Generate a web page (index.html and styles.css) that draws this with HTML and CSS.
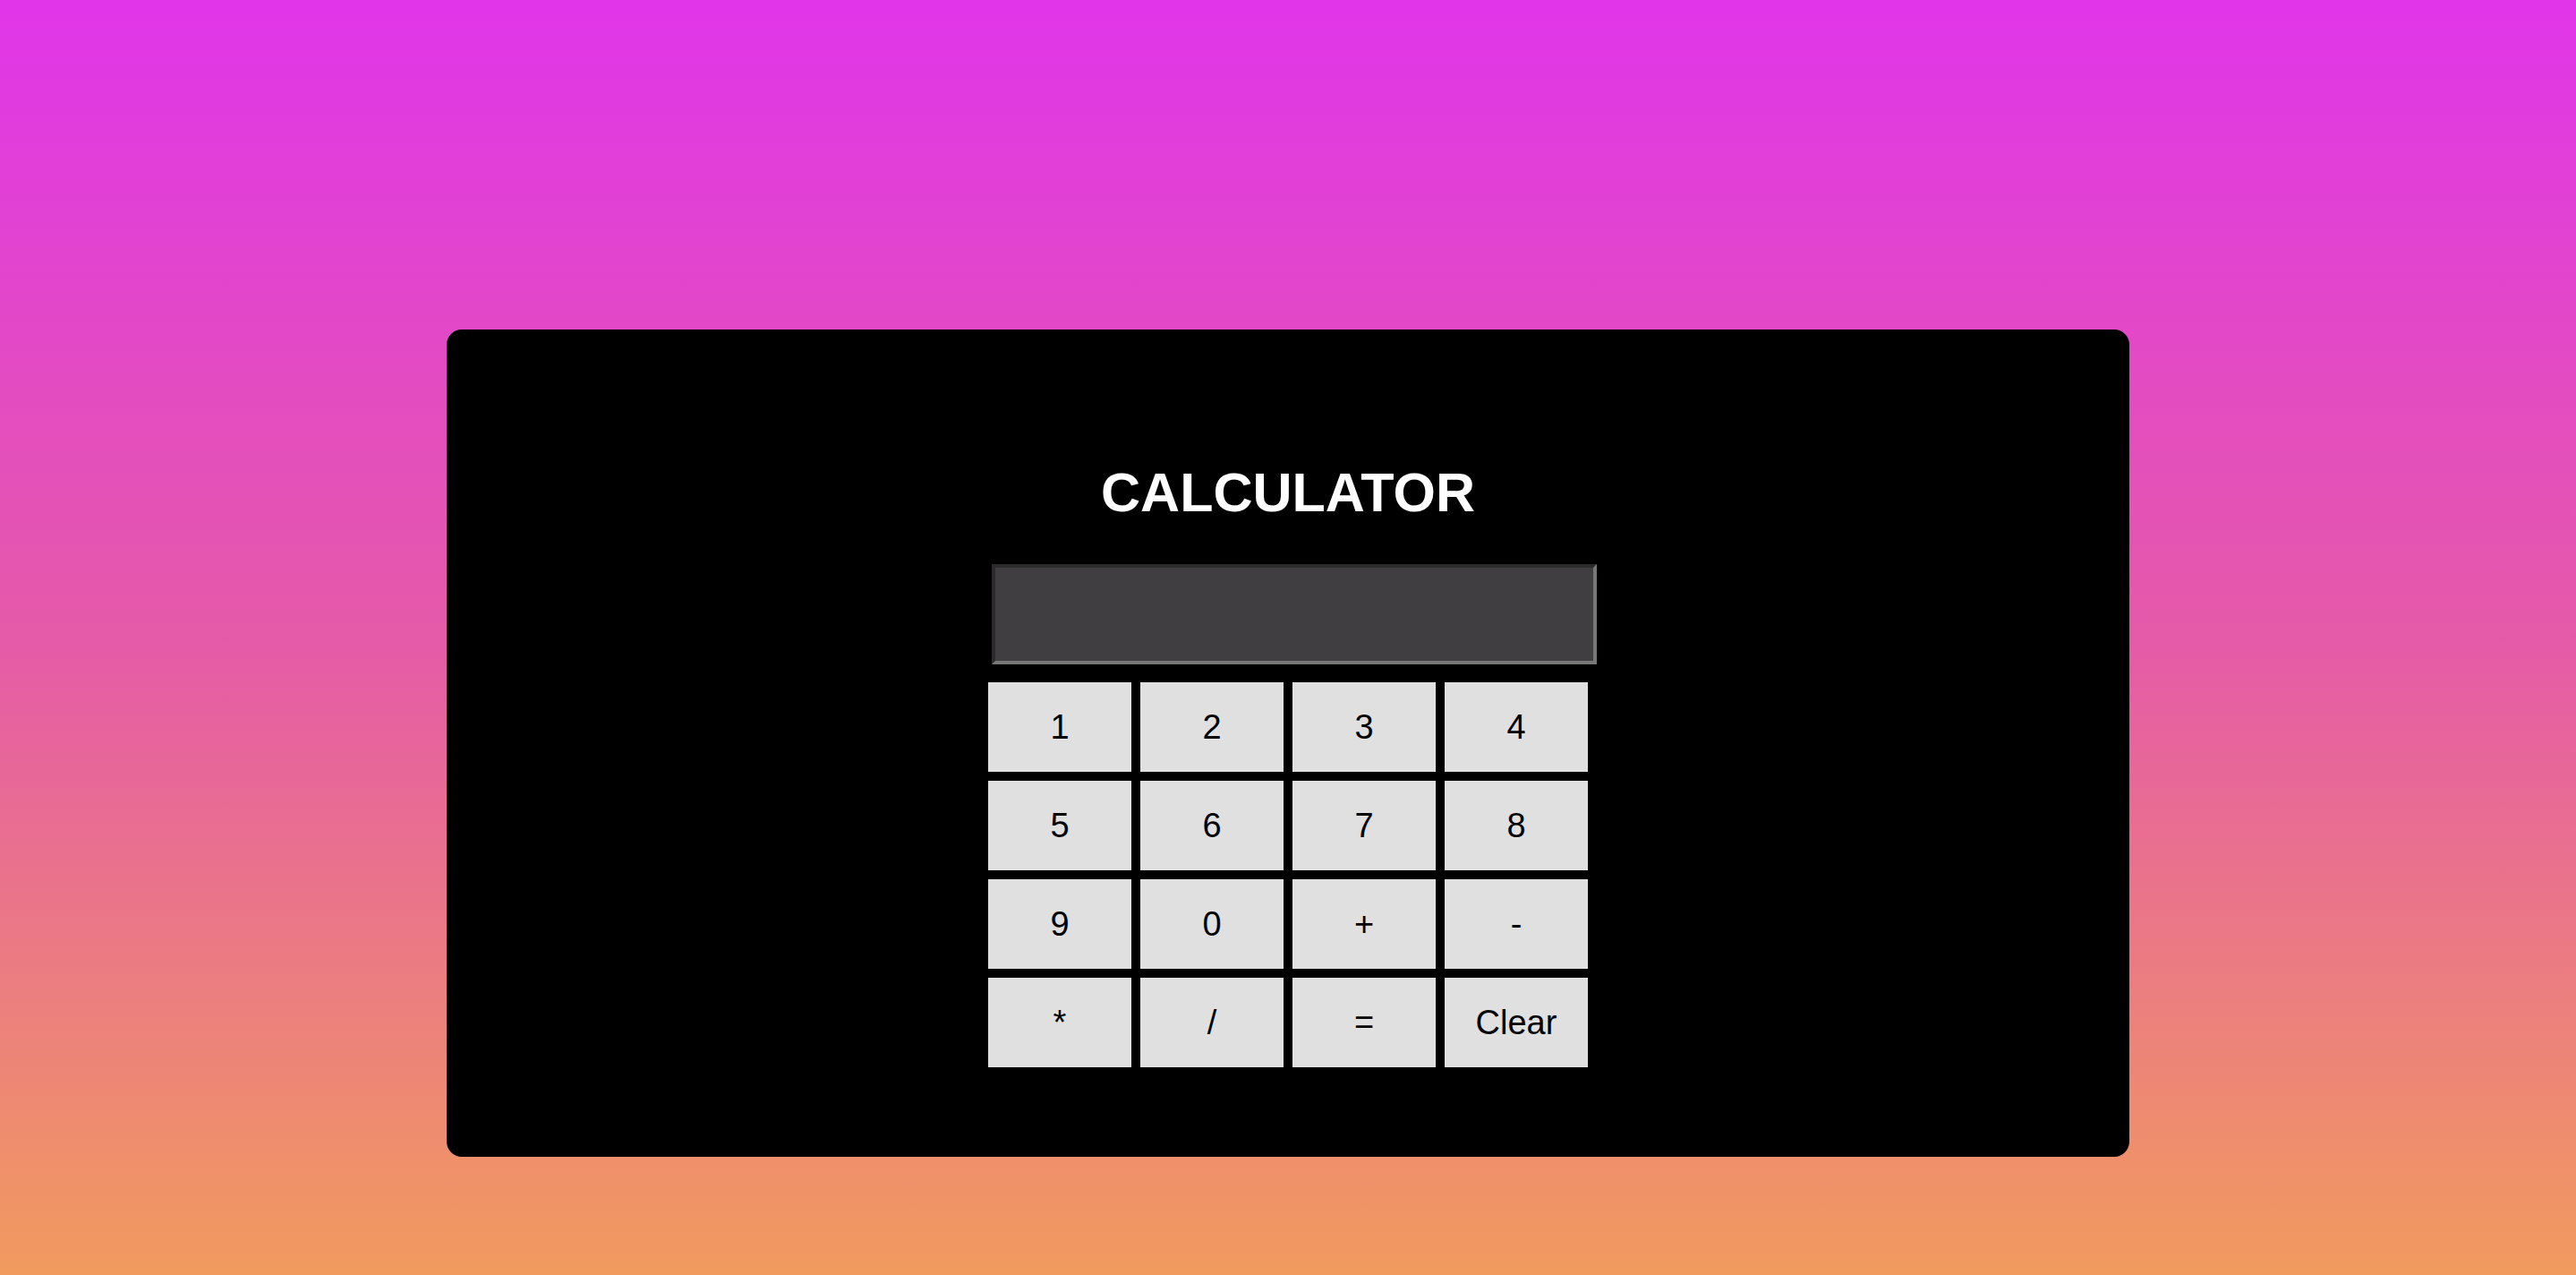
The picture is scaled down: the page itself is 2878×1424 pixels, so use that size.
FILE: index.html
```html
<!DOCTYPE html>
<html lang="en">
<head>
<meta charset="utf-8">
<title>Calculator</title>
<link rel="stylesheet" href="styles.css">
</head>
<body>
<main class="card">
  <h1 class="title">CALCULATOR</h1>
  <input class="display" type="text" readonly>
  <div class="keys">
    <button class="key">1</button>
    <button class="key">2</button>
    <button class="key">3</button>
    <button class="key">4</button>
    <button class="key">5</button>
    <button class="key">6</button>
    <button class="key">7</button>
    <button class="key">8</button>
    <button class="key">9</button>
    <button class="key">0</button>
    <button class="key">+</button>
    <button class="key">-</button>
    <button class="key">*</button>
    <button class="key">/</button>
    <button class="key">=</button>
    <button class="key">Clear</button>
  </div>
</main>
</body>
</html>
```

FILE: styles.css
```css
html, body {
  margin: 0;
  padding: 0;
}

body {
  min-height: 100vh;
  background: linear-gradient(180deg, #e035e9 0%, #e55aa8 50%, #f19b5e 100%);
  font-family: "Liberation Sans", Arial, sans-serif;
  overflow: hidden;
}

.card {
  width: 1880px;
  height: 924px;
  box-sizing: border-box;
  margin: 368px auto 0;
  background: #000;
  border-radius: 17px;
  padding-top: 148px;
  display: flex;
  flex-direction: column;
  align-items: center;
}

.title {
  margin: 0;
  color: #fff;
  font-size: 61px;
  font-weight: 700;
  line-height: 68px;
}

.display {
  margin: 46px 0 0 13px;
  width: 676px;
  height: 112px;
  box-sizing: border-box;
  border-width: 4px;
  border-style: solid;
  border-color: #2b2b2b #777777 #777777 #2b2b2b;
  background: #403e41;
  padding: 0;
  outline: none;
}

.keys {
  margin-top: 20px;
  display: grid;
  grid-template-columns: repeat(4, 160px);
  grid-auto-rows: 100px;
  column-gap: 10px;
  row-gap: 10px;
}

.key {
  border: none;
  margin: 0;
  padding: 0;
  background: #e0e0e0;
  color: #000;
  font-family: "Liberation Sans", Arial, sans-serif;
  font-size: 38px;
}
```
